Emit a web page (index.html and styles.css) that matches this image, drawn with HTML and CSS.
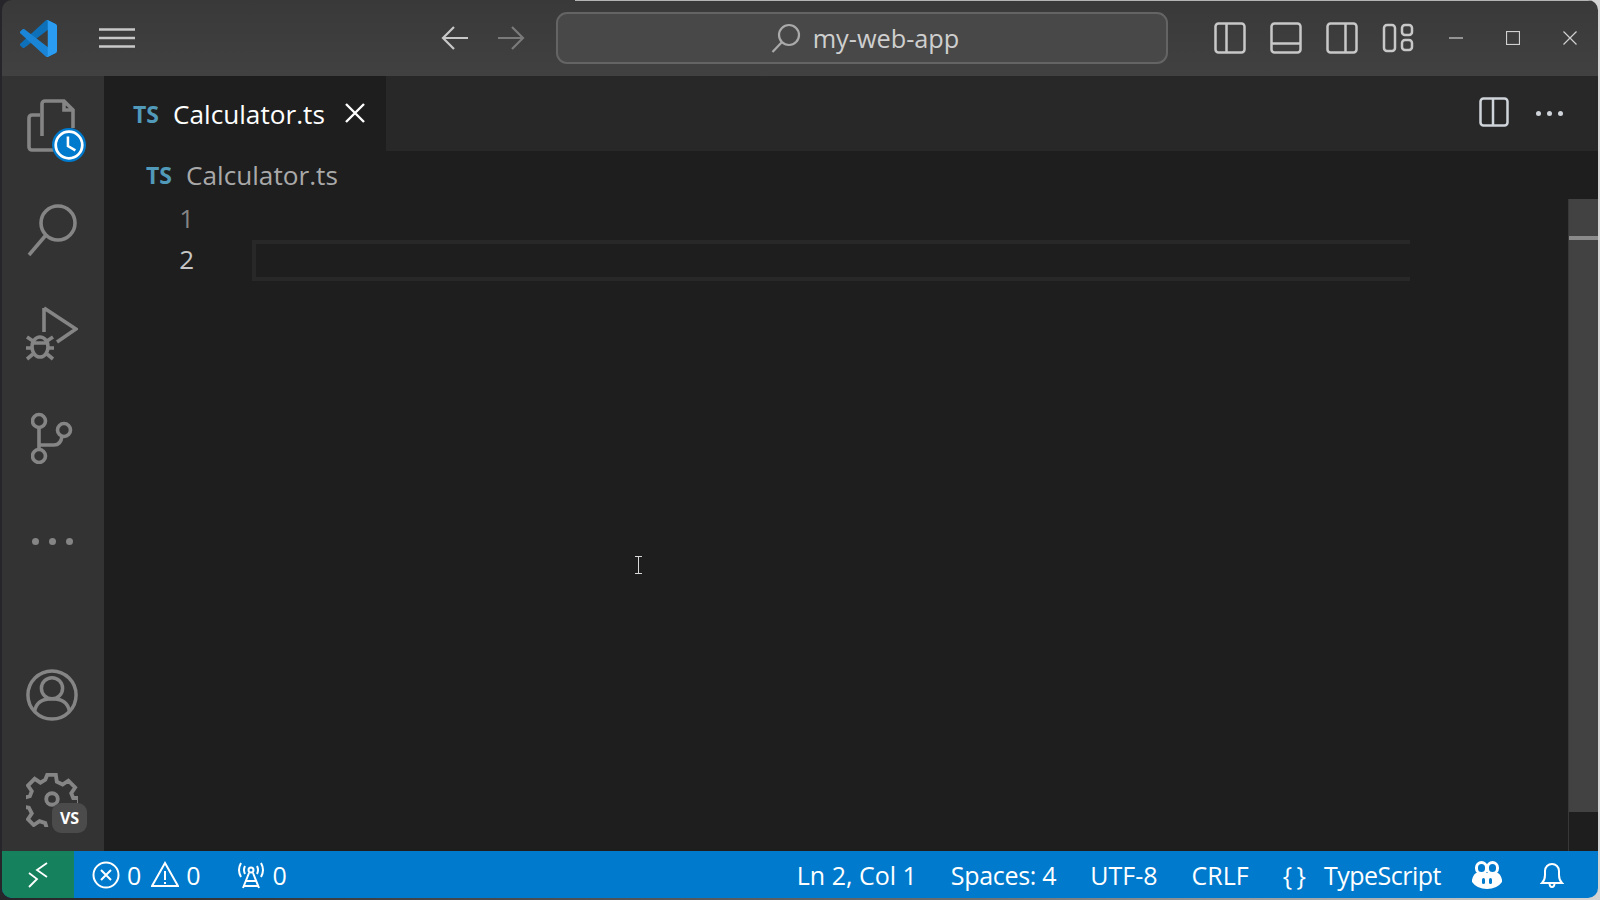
FILE: index.html
```html
<!DOCTYPE html>
<html lang="en">
<head>
<meta charset="utf-8">
<title>my-web-app</title>
<link rel="stylesheet" href="styles.css">
</head>
<body>
<div class="window">
  <header class="titlebar">
    <svg class="logo" viewBox="0 0 100 100"><path fill="#0e70b8" d="M96.46 10.8L75.86.87a6.23 6.23 0 0 0-7.1 1.21L1.32 63.57a4.16 4.16 0 0 0 0 6.16l5.51 5a4.16 4.16 0 0 0 5.32.24L93.36 12.6c2.72-2.07 6.64-.12 6.64 3.3v-.24a6.25 6.25 0 0 0-3.54-4.86z"/><path fill="#1a85d6" d="M96.46 89.2L75.86 99.13a6.23 6.23 0 0 1-7.1-1.21L1.32 36.43a4.16 4.16 0 0 1 0-6.16l5.51-5a4.16 4.16 0 0 1 5.32-.24L93.36 87.4c2.72 2.07 6.64.12 6.64-3.3v.24a6.25 6.25 0 0 1-3.54 4.86z"/><path fill="#2a9df2" d="M75.86 99.13a6.23 6.23 0 0 1-7.11-1.2c2.3 2.3 6.25.67 6.25-2.59V4.66c0-3.26-3.94-4.89-6.25-2.59a6.23 6.23 0 0 1 7.11-1.2l20.6 9.91A6.25 6.25 0 0 1 100 16.41v67.18a6.25 6.25 0 0 1-3.54 5.63z"/></svg>
    <svg class="ic menu" viewBox="0 0 36 20"><path d="M0 1.500h36M0 10h36M0 18.500h36"/></svg>
    <div class="nav">
      <svg class="ic arrow" viewBox="0 0 28 26"><path d="M27 13H2M13 2 2 13l11 11"/></svg>
      <svg class="ic arrow dim" viewBox="0 0 28 26"><path d="M1 13h25M15 2l11 11-11 11"/></svg>
    </div>
    <div class="search">
      <svg class="ic search-ic" viewBox="0 0 30 30"><circle cx="18" cy="12" r="10"/><path d="M11 19 1.500 29"/></svg>
      <span>my-web-app</span>
    </div>
    <div class="layouts">
      <svg class="ic lay" viewBox="0 0 32 32"><rect x="1.500" y="1.500" width="29" height="29" rx="3"/><path d="M12.500 2v28"/></svg>
      <svg class="ic lay" viewBox="0 0 32 32"><rect x="1.500" y="1.500" width="29" height="29" rx="3"/><path d="M2 21.500h28"/></svg>
      <svg class="ic lay" viewBox="0 0 32 32"><rect x="1.500" y="1.500" width="29" height="29" rx="3"/><path d="M19.500 2v28"/></svg>
      <svg class="ic lay" viewBox="0 0 32 32"><rect x="2" y="3" width="11" height="26" rx="3"/><rect x="20" y="3" width="10" height="10" rx="3"/><rect x="20" y="18" width="10" height="10" rx="3"/></svg>
    </div>
    <div class="winctl">
      <svg class="ic ctl" viewBox="0 0 14 14"><path d="M0 7h14"/></svg>
      <svg class="ic ctl" viewBox="0 0 14 14"><rect x=".5" y=".5" width="13" height="13"/></svg>
      <svg class="ic ctl" viewBox="0 0 14 14"><path d="m.5.5 13 13M13.500.5l-13 13"/></svg>
    </div>
  </header>
  <div class="main">
    <nav class="activity">
      <div class="act act-files">
        <svg class="ic act-ic" viewBox="0 0 50 56"><path d="M15 38V6a3 3 0 0 1 3-3h19l9 9v18M37 3v9h9M13 17H5a3 3 0 0 0-3 3v29a3 3 0 0 0 3 3h22a3 3 0 0 0 3-3v-2"/></svg>
        <span class="clock"><svg viewBox="0 0 32 32"><circle cx="16" cy="16" r="16" fill="#007acc"/><circle cx="16" cy="16" r="12.500" fill="none" stroke="#fff" stroke-width="2.600"/><path d="M15 8v9l7 4" fill="none" stroke="#fff" stroke-width="2.400"/></svg></span>
      </div>
      <div class="act"><svg class="ic act-ic" viewBox="0 0 52 54"><circle cx="32" cy="20" r="17"/><path d="M20 32 3 52"/></svg></div>
      <div class="act"><svg class="ic act-ic" viewBox="0 0 52 56"><path d="M18 2v24M18 2l32 21-19 13"/><ellipse cx="14" cy="41" rx="8" ry="10"/><path d="M6 37h16M1 31l6 4M27 31l-6 4M0 42h5M23 42h5M1 53l6-5M27 53l-6-5"/></svg></div>
      <div class="act"><svg class="ic act-ic git" viewBox="0 0 42 52"><circle cx="8" cy="9" r="6.500"/><circle cx="8" cy="44" r="6.500"/><circle cx="33" cy="18" r="6.500"/><path d="M8 16v22M8 33h15q7 0 8-9"/></svg></div>
      <div class="act dots"><i></i><i></i><i></i></div>
      <div class="grow"></div>
      <div class="act"><svg class="ic act-ic" viewBox="0 0 54 54"><circle cx="27" cy="27" r="25"/><circle cx="27" cy="20" r="11"/><path d="M9 44q2-13 18-13t18 13"/></svg></div>
      <div class="act act-gear">
        <svg class="ic act-ic gear" viewBox="0 0 54 54"><path d="M22 2h9l1 7 6 3 6-4 7 7-4 6 2 5h6v9l-7 2-2 6 4 6-7 6-6-4-5 2-2 6h-8l-2-7-6-2-6 4-6-6 4-6-3-6-6-1v-9l7-2 2-5-4-6 7-7 6 4 5-3z"/><circle cx="27" cy="27" r="6"/></svg>
        <span class="vs">VS</span>
      </div>
    </nav>
    <section class="editor">
      <div class="tabs">
        <div class="tab">
          <span class="ts">TS</span><span class="tabname">Calculator.ts</span>
          <svg class="ic tabx" viewBox="0 0 20 20"><path d="m1 1 18 18M19 1 1 19"/></svg>
        </div>
        <div class="tab-actions">
          <svg class="ic split" viewBox="0 0 30 30"><rect x="1.500" y="1.500" width="27" height="27" rx="3"/><path d="M14 2v26"/></svg>
          <span class="more"><i></i><i></i><i></i></span>
        </div>
      </div>
      <div class="crumbs"><span class="ts">TS</span><span>Calculator.ts</span></div>
      <div class="code">
        <div class="line"><span class="num">1</span></div>
        <div class="line current"><span class="num">2</span><span class="hl"></span></div>
      </div>
      <div class="scroll"><div class="thumb"><i></i></div></div>
      <svg class="ibeam" viewBox="0 0 9 18"><path d="M1 .5h7M4.500 .5v17M1 17.500h7"/></svg>
    </section>
  </div>
  <footer class="status">
    <div class="remote"><svg class="ic rem" viewBox="0 0 20 26"><path d="M1 11l8 6-8 8M19 1 9 8l10 7"/></svg></div>
    <div class="st-left">
      <span class="st"><svg class="ic st-ic" viewBox="0 0 28 28"><circle cx="14" cy="14" r="12.500"/><path d="m9 9 10 10M19 9 9 19"/></svg>0</span>
      <span class="st"><svg class="ic st-ic" viewBox="0 0 28 28"><path d="M14 2 27 25H1zM14 10v9M14 21v2"/></svg>0</span>
      <span class="st st-ports"><svg class="ic st-ic" viewBox="0 0 28 28"><circle cx="14" cy="9" r="2.500"/><path d="M12 12 6 27M16 12l6 15M9 20h10M7.500 25h13M4 2q-4 7 0 14M24 2q4 7 0 14M8 5q-2 4 0 8M20 5q2 4 0 8"/></svg>0</span>
    </div>
    <div class="st-right">
      <span>Ln 2, Col 1</span>
      <span class="spaces">Spaces: 4</span>
      <span>UTF-8</span>
      <span>CRLF</span>
      <span class="lang"><span class="braces">{ }</span><span class="lang-name">TypeScript</span></span>
      <svg class="copilot" viewBox="0 0 30 28"><path fill="#fff" d="M4 12h22q3 2 4 7v2q-5 7-15 7T0 21v-2q1-5 4-7z"/><rect x="4.500" y="1.500" width="10" height="11" rx="5" fill="#007acc" stroke="#fff" stroke-width="3"/><rect x="15.500" y="1.500" width="10" height="11" rx="5" fill="#007acc" stroke="#fff" stroke-width="3"/><rect x="10" y="17" width="3" height="6" rx="1.500" fill="#007acc"/><rect x="17" y="17" width="3" height="6" rx="1.500" fill="#007acc"/></svg>
      <svg class="ic bell" viewBox="0 0 24 28"><path d="M2 22q3-3 3-8V10a7 7 0 0 1 14 0v4q0 5 3 8zM9.500 22q0 4 2.500 4t2.500-4"/></svg>
    </div>
  </footer>
</div>
</body>
</html>
```

FILE: styles.css
```css
* { box-sizing: border-box; }
html, body { margin: 0; height: 100%; }
body {
  background: linear-gradient(90deg, #26262a 0%, #6a6d70 60%, #d4d4d4 100%);
  overflow: hidden;
  font-family: "Open Sans", "Noto Sans", sans-serif;
  color: #ccc;
}
.window {
  position: relative;
  width: 1596px;
  height: 898px;
  margin-left: 2px;
  border-radius: 10px;
  overflow: hidden;
  display: flex;
  flex-direction: column;
}
.window::before {
  content: "";
  position: absolute;
  top: 0;
  left: 573px;
  right: 0;
  height: 1px;
  background: #b4b4b4;
}

.ic { fill: none; stroke: #c8c8c8; stroke-width: 2.500; display: block; flex: none; }

/* Title bar */
.titlebar {
  height: 76px;
  flex: none;
  display: flex;
  align-items: center;
  background: linear-gradient(#393939, #414141);
}
.logo { width: 37px; height: 37px; margin-left: 18px; flex: none; }
.menu { width: 36px; height: 20px; margin-left: 42px; stroke-width: 2.400; }
.nav { display: flex; gap: 28px; margin-left: 306px; }
.arrow { width: 28px; height: 26px; stroke-width: 2.200; }
.arrow.dim { stroke: #7a7a7a; }
.search {
  width: 612px;
  height: 52px;
  margin-left: 31px;
  display: flex;
  align-items: center;
  justify-content: center;
  gap: 12px;
  padding-left: 6px;
  background: #484848;
  border: 2px solid #646464;
  border-radius: 11px;
  font-size: 25.300px;
  color: #cfcfcf;
}
.search-ic { width: 30px; height: 30px; stroke-width: 2.200; stroke: #aaa; }
.layouts { display: flex; gap: 24px; margin-left: 46px; }
.lay { width: 32px; height: 32px; }
.winctl { display: flex; gap: 43px; margin-left: 35px; }
.ctl { width: 14px; height: 14px; stroke-width: 1.200; stroke: #d0d0d0; }

/* Main */
.main { flex: 1; display: flex; min-height: 0; }
.activity {
  width: 102px;
  flex: none;
  background: #333334;
  display: flex;
  flex-direction: column;
  align-items: center;
  padding: 22px 2px 24px 0;
}
.act { position: relative; width: 52px; height: 56px; margin-bottom: 48px; display: flex; align-items: center; justify-content: center; }
.act:last-child { margin-bottom: 0; }
.act-ic { width: 52px; height: 56px; stroke: #858585; stroke-width: 3.600; }
.act-ic.git { width: 42px; height: 52px; }
.gear { stroke-width: 4; }
.clock { position: absolute; right: -8px; bottom: -8px; width: 34px; height: 34px; }
.clock svg { display: block; width: 100%; height: 100%; }
.dots { height: 10px; gap: 10px; margin-top: 22px; margin-bottom: 0; }
.dots i { width: 7px; height: 7px; border-radius: 50%; background: #858585; }
.grow { flex: 1; }
.vs {
  position: absolute;
  left: 26px;
  top: 32px;
  width: 35px;
  height: 30px;
  border-radius: 9px;
  background: #4b4b4b;
  color: #fff;
  font-size: 16px;
  font-weight: 700;
  display: flex;
  align-items: center;
  justify-content: center;
}

/* Editor */
.editor { position: relative; flex: 1; background: #1e1e1e; display: flex; flex-direction: column; min-width: 0; }
.tabs { height: 75px; flex: none; display: flex; background: #272827; }
.tab {
  width: 282px;
  background: #1e1e1e;
  display: flex;
  align-items: flex-start;
  padding: 20px 0 0 29px;
  font-size: 26.200px;
  line-height: 36px;
  color: #fff;
}
.ts { font-size: 23px; font-weight: 700; color: #519aba; line-height: 36px; }
.tabname { margin-left: 14px; }
.tabx { width: 20px; height: 20px; margin: 7px 0 0 20px; stroke: #fff; stroke-width: 2.400; }
.tab-actions { margin-left: auto; display: flex; align-items: center; gap: 28px; padding: 0 35px 4px 0; }
.split { width: 30px; height: 30px; stroke: #cfd4da; }
.more { display: flex; gap: 6px; margin: 4px 0 0 -1px; }
.more i { width: 5px; height: 5px; border-radius: 50%; background: #cfd4da; }
.crumbs {
  display: flex;
  align-items: center;
  height: 48px;
  padding: 0 0 0 42px;
  font-size: 26.200px;
  color: #a9a9a9;
}
.crumbs .ts { margin-right: 14px; }
.code { display: flex; flex-direction: column; }
.line { position: relative; height: 41px; display: flex; align-items: center; }
.num { width: 90px; padding-bottom: 4px; text-align: right; font-size: 26px; color: #858585; }
.current .num { color: #c6c6c6; }
.hl {
  position: absolute;
  left: 148px;
  top: 0;
  width: 1158px;
  height: 41px;
  border: 4px solid #282828;
  border-right: 0;
}
.scroll {
  position: absolute;
  right: 0;
  top: 123px;
  bottom: 0;
  width: 30px;
  border-left: 1px solid #383838;
}
.thumb { height: 613px; padding-top: 37px; background: #424242; }
.thumb i { display: block; height: 4px; background: #8a8a8a; }
.ibeam {
  position: absolute;
  left: 530px;
  top: 480px;
  width: 9px;
  height: 18px;
  fill: none;
  stroke: #d8d8d8;
  stroke-width: 1;
}

/* Status bar */
.status {
  height: 47px;
  flex: none;
  display: flex;
  align-items: center;
  background: #007acc;
  color: #fff;
  font-size: 25px;
}
.remote { width: 72px; height: 100%; background: #16825d; display: flex; align-items: center; justify-content: center; }
.rem { width: 20px; height: 26px; stroke: #fff; stroke-width: 1.800; }
.st-left { display: flex; align-items: center; margin-left: 18px; }
.st { display: flex; align-items: center; gap: 7px; margin-right: 10px; }
.st-ports { margin-left: 26px; margin-right: 0; gap: 8px; }
.st-ic { width: 28px; height: 28px; stroke: #fff; stroke-width: 2; }
.st-right { margin-left: auto; display: flex; align-items: center; gap: 34px; padding-right: 34px; }
.spaces { letter-spacing: -0.3px; }
.lang { display: flex; align-items: center; gap: 19px; }
.braces { letter-spacing: -1px; }
.lang-name { letter-spacing: -0.5px; }
.copilot { width: 30px; height: 28px; display: block; margin-left: -3px; }
.bell { width: 24px; height: 28px; stroke: #fff; stroke-width: 2; margin-left: 4px; }
```
